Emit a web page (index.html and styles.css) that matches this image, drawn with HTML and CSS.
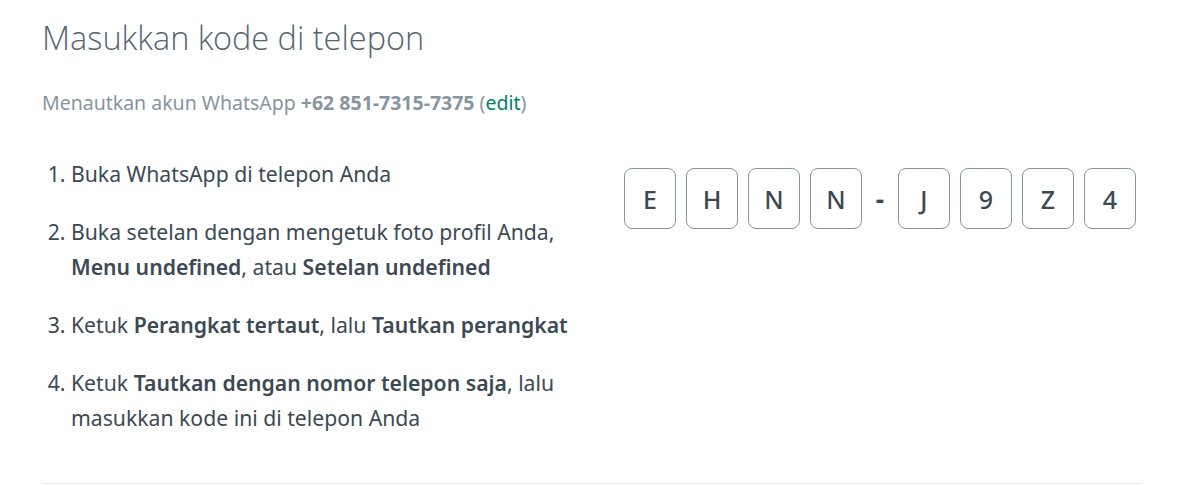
FILE: index.html
```html
<!DOCTYPE html>
<html lang="id">
<head>
<meta charset="utf-8">
<title>Masukkan kode di telepon</title>
<link rel="stylesheet" href="styles.css">
</head>
<body>
<main class="page">
  <h1 class="title">Masukkan kode di telepon</h1>
  <p class="subtitle">Menautkan akun WhatsApp <strong>+62 851-7315-7375</strong> (<a class="edit" href="#">edit</a>)</p>
  <section class="content">
    <ol class="steps">
      <li>Buka WhatsApp di telepon Anda</li>
      <li>Buka setelan dengan mengetuk foto profil Anda, <strong>Menu undefined</strong>, atau <strong>Setelan undefined</strong></li>
      <li>Ketuk <strong>Perangkat tertaut</strong>, lalu <strong>Tautkan perangkat</strong></li>
      <li>Ketuk <strong>Tautkan dengan nomor telepon saja</strong>, lalu masukkan kode ini di telepon Anda</li>
    </ol>
    <div class="code">
      <div class="group">
        <span class="cell">E</span><span class="cell">H</span><span class="cell">N</span><span class="cell">N</span>
      </div>
      <span class="dash">-</span>
      <div class="group">
        <span class="cell">J</span><span class="cell">9</span><span class="cell">Z</span><span class="cell">4</span>
      </div>
    </div>
  </section>
  <hr class="divider">
</main>
</body>
</html>
```

FILE: styles.css
```css
html, body {
  margin: 0;
  padding: 0;
  background: #ffffff;
}

body {
  font-family: "Segoe UI", "Noto Sans", "Open Sans", sans-serif;
  color: #3b4a54;
}

.page {
  width: 1100px;
  margin-left: 42px;
}

.title {
  margin: 0;
  padding-top: 16px;
  font-family: "Segoe UI Light", "Open Sans Light", "Noto Sans Light", "Open Sans", "Noto Sans", sans-serif;
  font-size: 32.5px;
  font-weight: 300;
  line-height: 44px;
  color: #54656f;
}

.subtitle {
  margin: 30px 0 0;
  font-size: 19.5px;
  line-height: 26px;
  color: #8696a0;
}

.subtitle strong {
  font-weight: 700;
}

.edit {
  color: #008069;
  text-decoration: none;
}

.content {
  display: flex;
  justify-content: space-between;
  margin-top: 40px;
}

.steps {
  margin: 0;
  padding-left: 29px;
  width: 506px;
  font-size: 21.2px;
  line-height: 35px;
}

.steps li {
  margin-bottom: 23px;
}

.steps li:last-child {
  margin-bottom: 0;
}

.steps strong {
  font-weight: 600;
}

.code {
  display: flex;
  align-items: center;
  margin-right: 6px;
  margin-top: 12px;
  align-self: flex-start;
}

.group {
  display: flex;
  gap: 10px;
}

.cell {
  display: flex;
  align-items: center;
  justify-content: center;
  width: 52px;
  height: 61px;
  box-sizing: border-box;
  border: 1px solid #8696a0;
  border-radius: 8px;
  font-size: 25px;
  font-weight: 500;
  color: #3b4a54;
}

.dash {
  width: 36px;
  text-align: center;
  font-size: 26px;
  font-weight: 700;
  color: #3b4a54;
}

.divider {
  margin: 48px 0 0;
  border: 0;
  border-top: 1px solid #e9edef;
}
```
